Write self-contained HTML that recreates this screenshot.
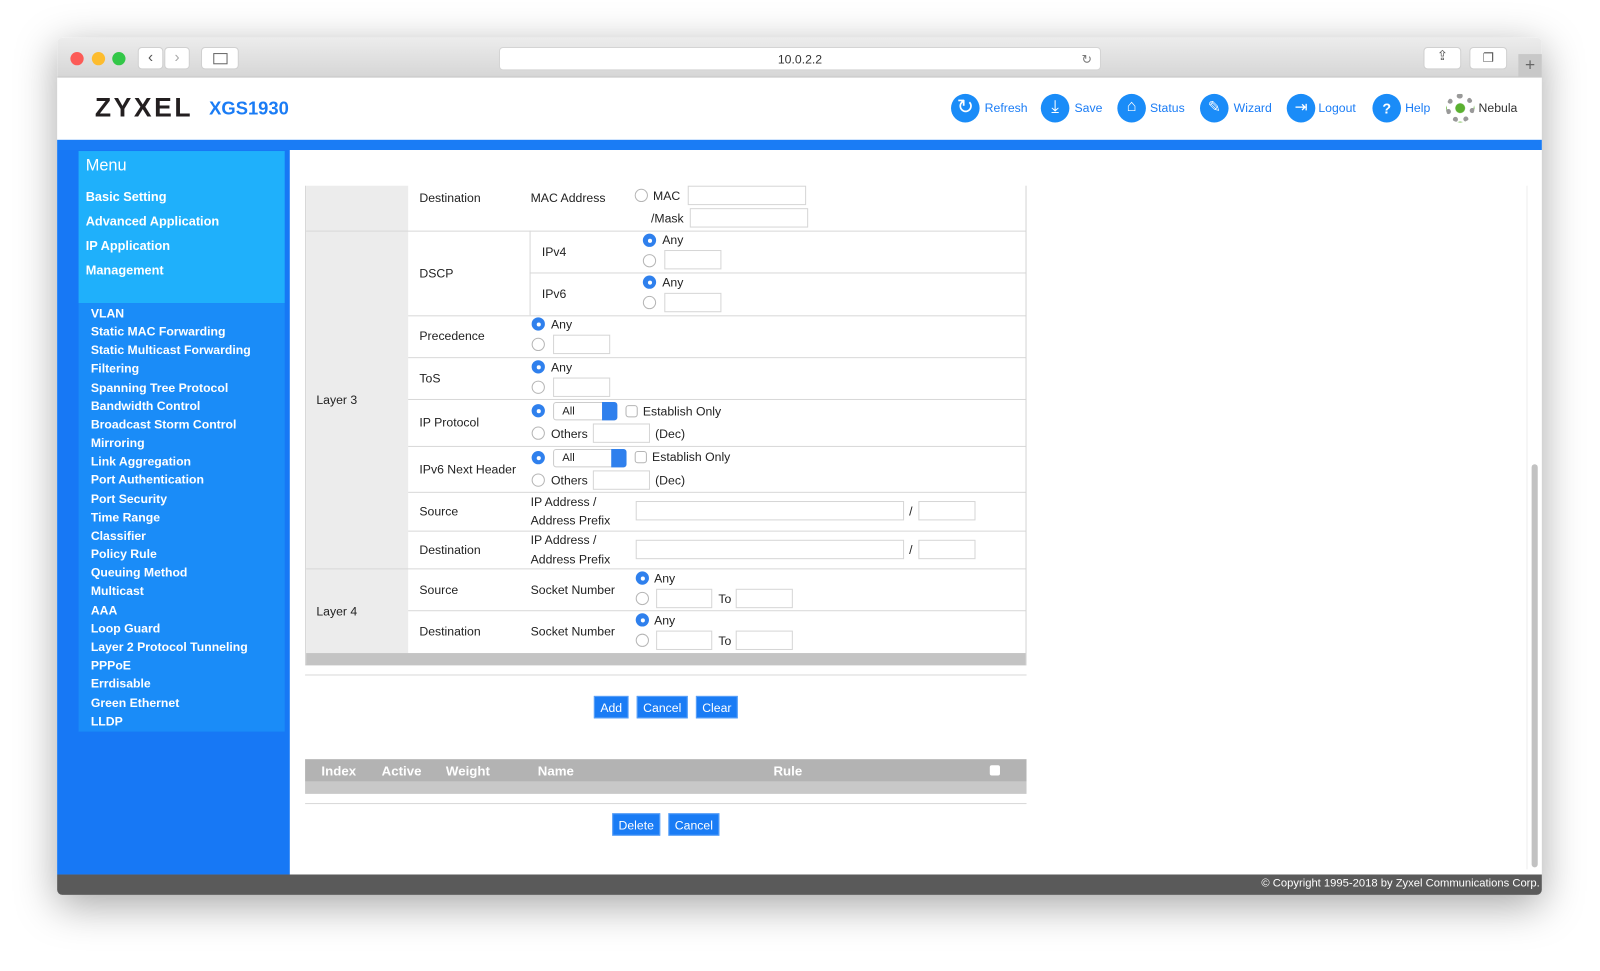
<!DOCTYPE html>
<html><head><meta charset="utf-8"><style>
*{margin:0;padding:0;box-sizing:border-box}
html,body{width:1600px;height:971px;overflow:hidden;background:#fff;font-family:"Liberation Sans",Arial,sans-serif}
#w{position:absolute;left:0;top:0;width:1568px;height:952px;transform:scale(1.0204);transform-origin:0 0}
.a{position:absolute}
.t{position:absolute;font-size:12px;color:#222;white-space:nowrap}
.r{position:absolute;width:13px;height:13px;border:1px solid #b5b5b5;border-radius:50%;background:#fff}
.rc{position:absolute;width:13px;height:13px;border-radius:50%;background:#2f80ed}
.rc:after{content:"";position:absolute;left:4.5px;top:4.5px;width:4px;height:4px;border-radius:50%;background:#fff}
.in{position:absolute;height:19px;border:1px solid #d6d6d6;background:#fff}
.h{position:absolute;height:1px;background:#d8d8d8}
.v{position:absolute;width:1px;background:#d8d8d8}
.sel{position:absolute;height:18px;border:1px solid #ccc;border-radius:3px;background:#fff;font-size:11px;padding:2px 8px;color:#222}
.sel i{position:absolute;right:-1px;top:-1px;width:15px;height:18px;background:#2f80ed;border-radius:0 3px 3px 0}
.cb{position:absolute;width:12px;height:12px;border:1px solid #b5b5b5;border-radius:3px;background:#fff}
.btn{position:absolute;height:22px;background:#1a7cf5;color:#fff;font-size:12px;text-align:center;line-height:22px;border:1px solid #5aa0f7}
.m{position:absolute;color:#fff;font-weight:bold;font-size:12px;left:89px}
.mm{position:absolute;color:#fff;font-weight:bold;font-size:12.5px;left:84px}
.ic{position:absolute;width:28px;height:28px;border-radius:50%;background:#1a8cf8}
.il{position:absolute;font-size:12px;color:#1a7cf5}
</style></head><body><div id="w">
<div class="a" style="left:56px;top:37px;width:1455px;height:840px;border-radius:5px;box-shadow:0 10px 40px rgba(0,0,0,.35);background:#fff;overflow:hidden">
 <div class="a" style="left:0;top:0;width:1455px;height:39px;background:linear-gradient(#ececec,#d6d6d6);border-bottom:1px solid #c2c2c2"></div>
</div>
<div class="a" style="left:69px;top:51px;width:13px;height:13px;border-radius:50%;background:#fc5b57"></div>
<div class="a" style="left:90px;top:51px;width:13px;height:13px;border-radius:50%;background:#fdbc2e"></div>
<div class="a" style="left:110px;top:51px;width:13px;height:13px;border-radius:50%;background:#33c748"></div>
<div class="a" style="left:135px;top:46px;width:25px;height:22px;background:#fff;border-radius:4px;border:1px solid #d0d0d0;font-size:15px;text-align:center;line-height:20px;color:#555">‹</div>
<div class="a" style="left:161px;top:46px;width:25px;height:22px;background:#fff;border-radius:4px;border:1px solid #d0d0d0;font-size:15px;text-align:center;line-height:20px;color:#aaa">›</div>
<div class="a" style="left:197px;top:46px;width:37px;height:22px;background:#fff;border-radius:4px;border:1px solid #d0d0d0"><div class="a" style="left:11px;top:5px;width:14px;height:11px;border:1px solid #666"></div></div>
<div class="a" style="left:489px;top:46px;width:590px;height:23px;background:#fff;border-radius:4px;border:1px solid #d4d4d4;font-size:12px;text-align:center;line-height:22px;color:#333">10.0.2.2<span style="position:absolute;right:8px;color:#777">↻</span></div>
<div class="a" style="left:1395px;top:46px;width:37px;height:22px;background:#fff;border-radius:4px;border:1px solid #d0d0d0;text-align:center;font-size:13px;color:#555">⇪</div>
<div class="a" style="left:1440px;top:46px;width:37px;height:22px;background:#fff;border-radius:4px;border:1px solid #d0d0d0;text-align:center;font-size:12px;color:#555;line-height:20px">❐</div>
<div class="a" style="left:1488px;top:53px;width:23px;height:23px;background:#c8c8c8;color:#666;text-align:center;font-size:17px;line-height:22px">+</div>
<div class="t" style="left:93px;top:90px;font-size:26px;font-weight:bold;letter-spacing:2.5px;color:#231f20">ZYXEL</div>
<div class="t" style="left:205px;top:96px;font-size:18px;font-weight:bold;color:#1a7cf5">XGS1930</div>
<div class="ic" style="left:932px;top:92px;color:#fff;text-align:center;font-size:20px;line-height:26px">↻</div><div class="il" style="left:965px;top:99px">Refresh</div>
<div class="ic" style="left:1020px;top:92px;color:#fff;text-align:center;font-size:17px;line-height:26px">⤓</div><div class="il" style="left:1053px;top:99px">Save</div>
<div class="ic" style="left:1095px;top:92px;color:#fff;text-align:center;font-size:16px;line-height:26px">⌂</div><div class="il" style="left:1127px;top:99px">Status</div>
<div class="ic" style="left:1176px;top:92px;color:#fff;text-align:center;font-size:15px;line-height:27px">✎</div><div class="il" style="left:1209px;top:99px">Wizard</div>
<div class="ic" style="left:1261px;top:92px;color:#fff;text-align:center;font-size:15px;line-height:27px">⇥</div><div class="il" style="left:1292px;top:99px">Logout</div>
<div class="ic" style="left:1345px;top:92px;color:#fff;text-align:center;font-size:14px;line-height:28px;font-weight:bold">?</div><div class="il" style="left:1377px;top:99px">Help</div>
<div class="a" style="left:1417px;top:92px;width:28px;height:28px;border-radius:50%;border:5px dotted #999;background:radial-gradient(#5ab030 35%,transparent 40%)"></div><div class="il" style="left:1449px;top:99px;color:#333">Nebula</div>
<div class="a" style="left:56px;top:137px;width:1455px;height:10px;background:#1a7cf5"></div>
<div class="a" style="left:56px;top:147px;width:228px;height:710px;background:#1778f5"></div>
<div class="a" style="left:77px;top:148px;width:202px;height:149px;background:#1fb0fb"></div>
<div class="a" style="left:77px;top:297px;width:202px;height:420px;background:#1a8cf8"></div>
<div class="mm" style="top:154px;font-size:16px;font-weight:normal">Menu</div>
<div class="mm" style="top:186px">Basic Setting</div>
<div class="mm" style="top:210px">Advanced Application</div>
<div class="mm" style="top:234px">IP Application</div>
<div class="mm" style="top:258px">Management</div>
<div class="m" style="top:300px">VLAN</div>
<div class="m" style="top:318px">Static MAC Forwarding</div>
<div class="m" style="top:336px">Static Multicast Forwarding</div>
<div class="m" style="top:354px">Filtering</div>
<div class="m" style="top:373px">Spanning Tree Protocol</div>
<div class="m" style="top:391px">Bandwidth Control</div>
<div class="m" style="top:409px">Broadcast Storm Control</div>
<div class="m" style="top:427px">Mirroring</div>
<div class="m" style="top:445px">Link Aggregation</div>
<div class="m" style="top:463px">Port Authentication</div>
<div class="m" style="top:482px">Port Security</div>
<div class="m" style="top:500px">Time Range</div>
<div class="m" style="top:518px">Classifier</div>
<div class="m" style="top:536px">Policy Rule</div>
<div class="m" style="top:554px">Queuing Method</div>
<div class="m" style="top:572px">Multicast</div>
<div class="m" style="top:591px">AAA</div>
<div class="m" style="top:609px">Loop Guard</div>
<div class="m" style="top:627px">Layer 2 Protocol Tunneling</div>
<div class="m" style="top:645px">PPPoE</div>
<div class="m" style="top:663px">Errdisable</div>
<div class="m" style="top:682px">Green Ethernet</div>
<div class="m" style="top:700px">LLDP</div>
<div class="a" style="left:56px;top:857px;width:1455px;height:20px;background:#5a5a5a;border-radius:0 0 5px 5px"></div>
<div class="t" style="right:59px;top:860px;color:#fff;font-size:11px">© Copyright 1995-2018 by Zyxel Communications Corp.</div>
<div class="a" style="left:1501px;top:455px;width:6px;height:395px;border-radius:3px;background:#c2c2c2"></div>
<div class="a" style="left:1496px;top:182px;width:1px;height:670px;background:#eee"></div>
<div class="a" style="left:299px;top:182px;width:707px;height:470px;border:1px solid #d4d4d4;border-top:none;background:#fff"></div>
<div class="a" style="left:300px;top:182px;width:100px;height:458px;background:#ececec"></div>
<div class="h" style="left:300px;top:226px;width:705px"></div>
<div class="h" style="left:519px;top:267px;width:486px"></div>
<div class="v" style="left:519px;top:226px;height:83px"></div>
<div class="h" style="left:400px;top:309px;width:605px"></div>
<div class="h" style="left:400px;top:350px;width:605px"></div>
<div class="h" style="left:400px;top:391px;width:605px"></div>
<div class="h" style="left:400px;top:437px;width:605px"></div>
<div class="h" style="left:400px;top:482px;width:605px"></div>
<div class="h" style="left:400px;top:520px;width:605px"></div>
<div class="h" style="left:300px;top:557px;width:705px"></div>
<div class="h" style="left:400px;top:598px;width:605px"></div>
<div class="a" style="left:300px;top:640px;width:705px;height:12px;background:#c4c4c4"></div>
<div class="t" style="left:411px;top:187px">Destination</div>
<div class="t" style="left:520px;top:187px">MAC Address</div>
<div class="r" style="left:622px;top:185px"></div><div class="t" style="left:640px;top:185px">MAC</div><div class="in" style="left:674px;top:182px;width:116px"></div>
<div class="t" style="left:638px;top:207px">/Mask</div><div class="in" style="left:676px;top:204px;width:116px"></div>
<div class="t" style="left:411px;top:261px">DSCP</div>
<div class="t" style="left:531px;top:240px">IPv4</div>
<div class="rc" style="left:630px;top:229px"></div><div class="t" style="left:649px;top:228px">Any</div>
<div class="r" style="left:630px;top:249px"></div><div class="in" style="left:651px;top:245px;width:56px"></div>
<div class="t" style="left:531px;top:281px">IPv6</div>
<div class="rc" style="left:630px;top:270px"></div><div class="t" style="left:649px;top:270px">Any</div>
<div class="r" style="left:630px;top:290px"></div><div class="in" style="left:651px;top:287px;width:56px"></div>
<div class="t" style="left:411px;top:322px">Precedence</div>
<div class="rc" style="left:521px;top:311px"></div><div class="t" style="left:540px;top:311px">Any</div>
<div class="r" style="left:521px;top:331px"></div><div class="in" style="left:542px;top:328px;width:56px"></div>
<div class="t" style="left:411px;top:364px">ToS</div>
<div class="rc" style="left:521px;top:353px"></div><div class="t" style="left:540px;top:353px">Any</div>
<div class="r" style="left:521px;top:373px"></div><div class="in" style="left:542px;top:370px;width:56px"></div>
<div class="t" style="left:310px;top:385px">Layer 3</div>
<div class="t" style="left:411px;top:407px">IP Protocol</div>
<div class="rc" style="left:521px;top:396px"></div><div class="sel" style="left:542px;top:394px;width:63px">All<i></i></div>
<div class="cb" style="left:613px;top:397px"></div><div class="t" style="left:630px;top:396px">Establish Only</div>
<div class="r" style="left:521px;top:418px"></div><div class="t" style="left:540px;top:418px">Others</div><div class="in" style="left:581px;top:415px;width:56px"></div><div class="t" style="left:642px;top:418px">(Dec)</div>
<div class="t" style="left:411px;top:453px">IPv6 Next Header</div>
<div class="rc" style="left:521px;top:442px"></div><div class="sel" style="left:542px;top:440px;width:72px">All<i></i></div>
<div class="cb" style="left:622px;top:442px"></div><div class="t" style="left:639px;top:441px">Establish Only</div>
<div class="r" style="left:521px;top:464px"></div><div class="t" style="left:540px;top:464px">Others</div><div class="in" style="left:581px;top:461px;width:56px"></div><div class="t" style="left:642px;top:464px">(Dec)</div>
<div class="t" style="left:411px;top:494px">Source</div>
<div class="t" style="left:520px;top:485px">IP Address /</div><div class="t" style="left:520px;top:503px">Address Prefix</div>
<div class="in" style="left:623px;top:491px;width:263px"></div><div class="t" style="left:891px;top:494px">/</div><div class="in" style="left:900px;top:491px;width:56px"></div>
<div class="t" style="left:411px;top:532px">Destination</div>
<div class="t" style="left:520px;top:522px">IP Address /</div><div class="t" style="left:520px;top:541px">Address Prefix</div>
<div class="in" style="left:623px;top:529px;width:263px"></div><div class="t" style="left:891px;top:532px">/</div><div class="in" style="left:900px;top:529px;width:56px"></div>
<div class="t" style="left:310px;top:592px">Layer 4</div>
<div class="t" style="left:411px;top:571px">Source</div><div class="t" style="left:520px;top:571px">Socket Number</div>
<div class="rc" style="left:623px;top:560px"></div><div class="t" style="left:641px;top:560px">Any</div>
<div class="r" style="left:623px;top:580px"></div><div class="in" style="left:643px;top:577px;width:55px"></div><div class="t" style="left:704px;top:580px">To</div><div class="in" style="left:721px;top:577px;width:56px"></div>
<div class="t" style="left:411px;top:612px">Destination</div><div class="t" style="left:520px;top:612px">Socket Number</div>
<div class="rc" style="left:623px;top:601px"></div><div class="t" style="left:641px;top:601px">Any</div>
<div class="r" style="left:623px;top:621px"></div><div class="in" style="left:643px;top:618px;width:55px"></div><div class="t" style="left:704px;top:621px">To</div><div class="in" style="left:721px;top:618px;width:56px"></div>
<div class="h" style="left:299px;top:661px;width:707px"></div>
<div class="btn" style="left:582px;top:682px;width:34px">Add</div>
<div class="btn" style="left:624px;top:682px;width:50px">Cancel</div>
<div class="btn" style="left:682px;top:682px;width:41px">Clear</div>
<div class="a" style="left:299px;top:744px;width:707px;height:22px;background:#b3b3b3"></div>
<div class="a" style="left:299px;top:766px;width:707px;height:12px;background:#c8c8c8"></div>
<div class="t" style="left:315px;top:748px;color:#fff;font-weight:bold;font-size:13px">Index</div>
<div class="t" style="left:374px;top:748px;color:#fff;font-weight:bold;font-size:13px">Active</div>
<div class="t" style="left:437px;top:748px;color:#fff;font-weight:bold;font-size:13px">Weight</div>
<div class="t" style="left:527px;top:748px;color:#fff;font-weight:bold;font-size:13px">Name</div>
<div class="t" style="left:758px;top:748px;color:#fff;font-weight:bold;font-size:13px">Rule</div>
<div class="a" style="left:970px;top:750px;width:10px;height:10px;border-radius:2px;background:#fff"></div>
<div class="h" style="left:299px;top:787px;width:707px"></div>
<div class="btn" style="left:600px;top:797px;width:47px">Delete</div>
<div class="btn" style="left:655px;top:797px;width:50px">Cancel</div>
</div></body></html>
